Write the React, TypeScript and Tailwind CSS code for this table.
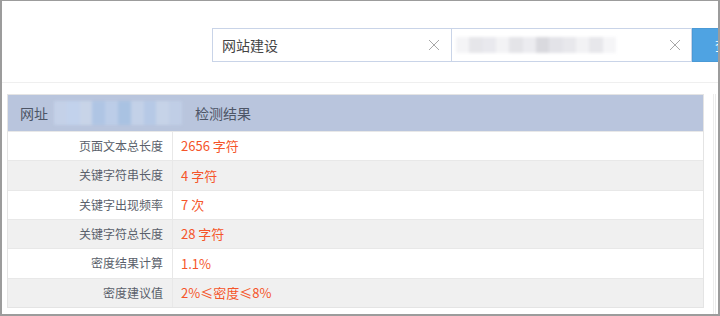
import React from 'react';

const ROWS: [string, string][] = [
  ['页面文本总长度', '2656 字符'],
  ['关键字符串长度', '4 字符'],
  ['关键字出现频率', '7 次'],
  ['关键字符总长度', '28 字符'],
  ['密度结果计算', '1.1%'],
  ['密度建议值', '2%≤密度≤8%'],
];

// blurred placeholder for hidden text (mosaic look)
const Mosaic: React.FC<{ cells: string[]; className?: string }> = ({ cells, className }) => (
  <div className={`flex shrink-0 blur-[1.5px] ${className ?? ''}`}>
    {cells.map((c, i) => (
      <div key={i} className="h-full flex-1" style={{ background: c }} />
    ))}
  </div>
);

const XIcon = () => (
  <svg width="12" height="12" viewBox="0 0 12 12" className="shrink-0">
    <path d="M1 1L11 11M11 1L1 11" stroke="#a8a8a8" strokeWidth="1" />
  </svg>
);

export default function App() {
  return (
    <div
      className="w-[720px] h-[316px] overflow-hidden bg-white border-x-2 border-t border-b-2 border-[#9c9c9c] flex flex-col"
      style={{ fontFamily: '"Noto Sans CJK SC", "Noto Sans", sans-serif' }}
    >
      {/* search bar */}
      <div className="h-[82px] shrink-0 border-b border-[#efefef] pt-[27px] pl-[210px]">
        <div className="flex h-[34px] w-[600px]">
          <div className="flex items-center w-[240px] border border-[#c9d4e8] pl-[9px] pr-[11px]">
            <span className="flex-1 text-[14px] text-[#444]">网站建设</span>
            <XIcon />
          </div>
          <div className="flex items-center w-[240px] border-y border-r border-[#c9d4e8] pl-[4px] pr-[10px]">
            <div className="flex-1 h-[22px] flex items-center">
              <Mosaic
                className="h-[16px] w-[160px]"
                cells={['#f4f4f6', '#e6e6ea', '#e9e9ee', '#f3f3f5', '#e4e4e8', '#ececf0', '#d9d9de', '#e3e3e8', '#e8e8ec', '#f2f2f4', '#e7e7eb', '#f5f5f7']}
              />
            </div>
            <XIcon />
          </div>
          <div className="w-[80px] bg-[#4fa3e2] border border-[#4a9ad6] flex items-center pl-[22px] text-white text-[13px] whitespace-nowrap">
            查询
          </div>
        </div>
      </div>

      {/* result table */}
      <div className="flex-1 flex pt-[11px] pl-[5px]">
        <div className="w-[697px] h-[214px] flex flex-col border border-[#e4e4e4]">
          <div className="h-[36px] shrink-0 bg-[#b9c5dd] flex items-center text-[14px] text-[#4d5566]">
            <div className="w-[164px] shrink-0 flex items-center pl-[12px] gap-[6px] whitespace-nowrap">
              <span className="shrink-0">网址</span>
              <Mosaic
                className="h-[24px] w-[128px]"
                cells={['#c4d1e8', '#c2d2ec', '#c8d4e8', '#afc5e4', '#bccde8', '#a9c2e2', '#c3d1e8', '#b6c9e6', '#c6d3e8', '#c0cee6']}
              />
            </div>
            <div className="pl-[23px] whitespace-nowrap">检测结果</div>
          </div>
          <div className="flex-1 grid grid-rows-6">
            {ROWS.map(([label, value], i) => (
              <div
                key={label}
                className={`flex items-center border-t border-[#e8e8e8] ${i % 2 === 1 ? 'bg-[#f0f0f0]' : 'bg-white'}`}
              >
                <div className="w-[165px] h-full flex items-center justify-end pr-[9px] border-r border-[#e8e8e8] text-[12px] text-[#5a5f6b]">
                  {label}
                </div>
                <div className="pl-[8px] text-[13px] text-[#f5552a]">{value}</div>
              </div>
            ))}
          </div>
        </div>
        <div className="ml-[9px] w-[3px] border-l border-r border-[#ececec]" />
      </div>
    </div>
  );
}
